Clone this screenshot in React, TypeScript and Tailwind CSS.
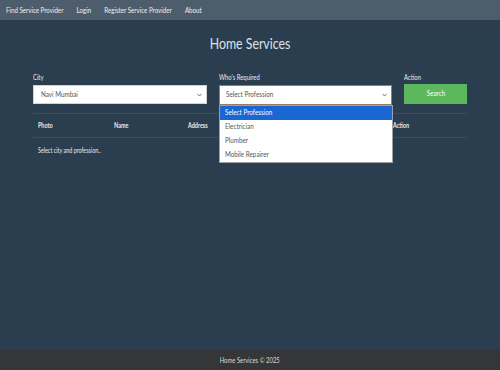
import React from "react";

function S({ children, k = "l" }: { children: React.ReactNode; k?: string }) {
  return <span className={k === "c" ? "inline-block origin-center scale-x-[0.84] whitespace-nowrap" : "inline-block origin-left scale-x-[0.84] whitespace-nowrap"}>{children}</span>;
}

function Chevron() {
  return (
    <svg width="5" height="4" viewBox="0 0 5 4" className="shrink-0">
      <path d="M0.6 1 L2.5 3 L4.4 1" fill="none" stroke="#555" strokeWidth="0.8" />
    </svg>
  );
}

export default function App() {
  const font = { fontFamily: "Lato, 'Noto Sans', sans-serif" };
  return (
    <div className="w-[500px] h-[370px] flex flex-col bg-[#2b3e50] text-[#ebebeb] overflow-hidden" style={font}>
      <nav className="h-[20px] bg-[#4e5d6c] flex items-center px-[6px] text-[7px] text-[#f0f0f0] shrink-0">
        <div className="flex gap-[15px] origin-left scale-x-[0.88] whitespace-nowrap">
          <span>Find Service Provider</span>
          <span>Login</span>
          <span>Register Service Provider</span>
          <span>About</span>
        </div>
      </nav>
      <main className="flex-1 px-[33px]">
        <h1 className="text-center text-[15px] leading-none mt-[16px] text-[#dde1e5]">
          <span className="inline-block origin-center scale-x-[0.82]">Home Services</span>
        </h1>
        <div className="flex mt-[22px] gap-[12px]">
          <div className="w-[174px] flex flex-col">
            <label className="text-[7px] mb-[3px] leading-[9px]"><S>City</S></label>
            <div className="h-[19px] bg-white flex items-center justify-between pl-[7px] pr-[4px] text-[7.5px] text-[#555] border border-[#cfd4d9]">
              <S>Navi Mumbai</S>
              <Chevron />
            </div>
          </div>
          <div className="w-[174px] flex flex-col relative">
            <label className="text-[7px] mb-[3px] leading-[9px]"><S>Who's Required</S></label>
            <div className="relative">
              <div className="h-[20px] bg-white flex items-center justify-between pl-[6px] pr-[4px] text-[7.5px] text-[#555] border border-[#9c7b5e]">
                <S>Select Profession</S>
                <Chevron />
              </div>
              <ul className="absolute left-0 top-full w-[174px] bg-white border border-[#9aa0a6] text-[7.5px] text-[#555] z-10">
                <li className="h-[14px] flex items-center px-[5px] bg-[#1967d2] text-white"><S>Select Profession</S></li>
                <li className="h-[14px] flex items-center px-[5px]"><S>Electrician</S></li>
                <li className="h-[14px] flex items-center px-[5px]"><S>Plumber</S></li>
                <li className="h-[14px] flex items-center px-[5px]"><S>Mobile Repairer</S></li>
              </ul>
            </div>
          </div>
          <div className="w-[63px] flex flex-col">
            <label className="text-[7px] mb-[2px] leading-[9px]"><S>Action</S></label>
            <button className="h-[20px] bg-[#5cb85c] text-white text-[7.5px]"><S k="c">Search</S></button>
          </div>
        </div>
        <table className="w-[434px] mt-[8px] text-[6.5px] border-collapse">
          <thead>
            <tr className="border-t border-b border-[#3b4d5f]">
              <th className="text-left font-bold h-[24px] px-[5px] w-[76px]"><S>Photo</S></th>
              <th className="text-left font-bold px-[5px] w-[74px]"><S>Name</S></th>
              <th className="text-left font-bold px-[5px] w-[70px]"><S>Address</S></th>
              <th className="text-left font-bold px-[5px] w-[70px]"><S>Contact</S></th>
              <th className="text-left font-bold px-[5px] w-[70px]"><S>Profession</S></th>
              <th className="text-left font-bold px-[0px]"><S>Action</S></th>
            </tr>
          </thead>
          <tbody>
            <tr>
              <td colSpan={6} className="px-[5px] h-[24px] text-[7px]">
                <span className="inline-block origin-left scale-x-[0.77] whitespace-nowrap">Select city and profession..</span>
              </td>
            </tr>
          </tbody>
        </table>
      </main>
      <footer className="h-[20px] bg-[#343638] flex items-center justify-center text-[7px] text-[#dcdcdc] shrink-0">
        <S k="c">Home Services © 2025</S>
      </footer>
    </div>
  );
}
